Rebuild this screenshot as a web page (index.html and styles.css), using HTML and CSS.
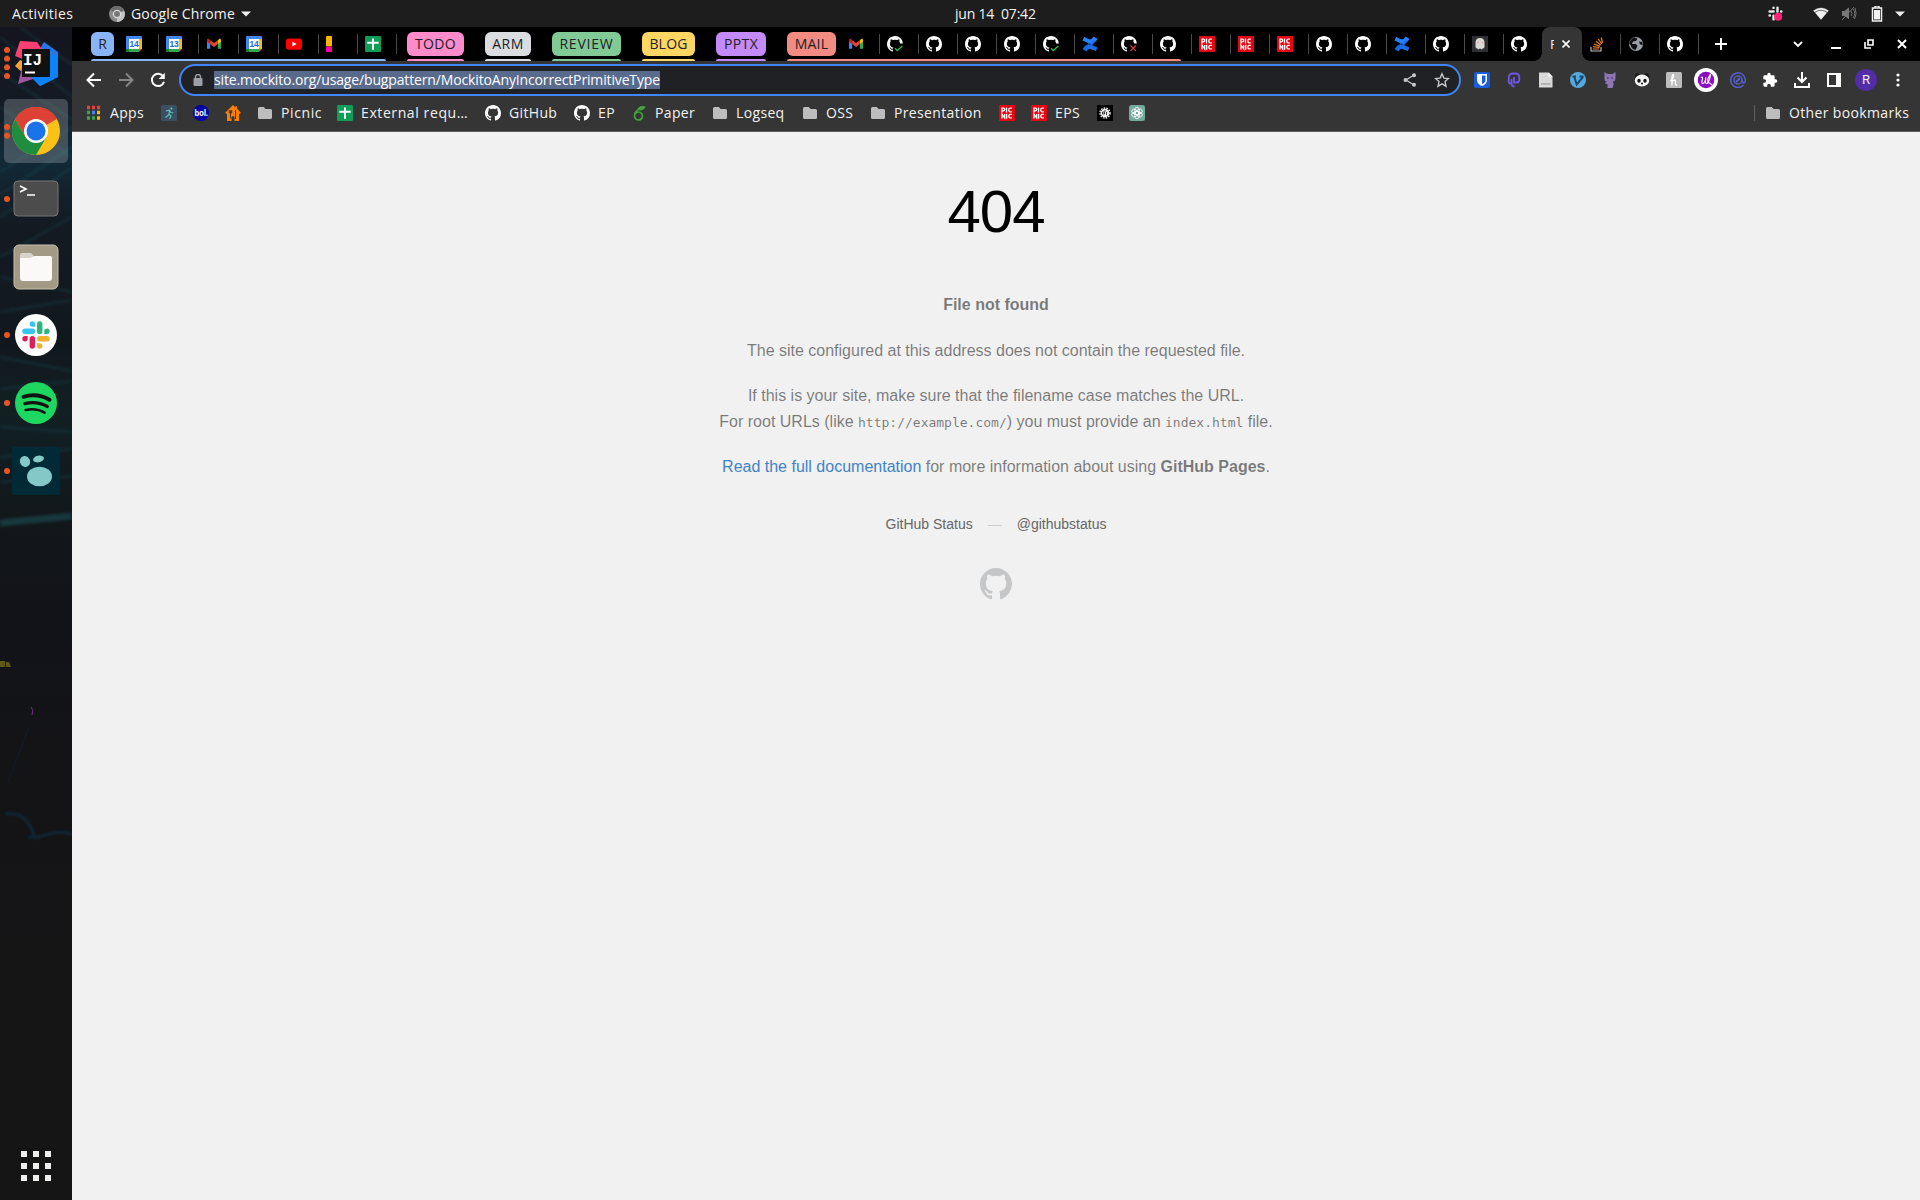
FILE: index.html
```html
<!DOCTYPE html>
<html lang="en">
<head>
<meta charset="utf-8">
<title>Page not found · GitHub Pages</title>
<link rel="stylesheet" href="styles.css">
</head>
<body>
<svg class="defs" width="0" height="0" aria-hidden="true">
  <symbol id="gh" viewBox="0 0 16 16"><path d="M8 0C3.58 0 0 3.58 0 8c0 3.54 2.29 6.53 5.47 7.59.4.07.55-.17.55-.38 0-.19-.01-.82-.01-1.49-2.01.37-2.53-.49-2.69-.94-.09-.23-.48-.94-.82-1.13-.28-.15-.68-.52-.01-.53.63-.01 1.08.58 1.23.82.72 1.21 1.87.87 2.33.66.07-.52.28-.87.51-1.07-1.78-.2-3.64-.89-3.64-3.95 0-.87.31-1.59.82-2.15-.08-.2-.36-1.02.08-2.12 0 0 .67-.21 2.2.82.64-.18 1.32-.27 2-.27s1.36.09 2 .27c1.53-1.04 2.2-.82 2.2-.82.44 1.1.16 1.92.08 2.12.51.56.82 1.27.82 2.15 0 3.07-1.87 3.75-3.65 3.95.29.25.54.73.54 1.48 0 1.07-.01 1.93-.01 2.2 0 .21.15.46.55.38A8.01 8.01 0 0 0 16 8c0-4.42-3.58-8-8-8z"/></symbol>
  <symbol id="ghcut" viewBox="0 0 16 16"><path d="M8 0C3.6 0 0 3.6 0 8c0 3.500 2.300 6.500 5.500 7.600.4 0 .5-.2.5-.4v-1.500c-2 .4-2.500-.5-2.700-.9-.1-.3-.5-1-.8-1.200.5-.6 1 0 1.200.3.700 1.200 1.900.9 2.300.7.1-.5.300-.900.500-1.100C4.700 11.300 2.900 10.600 2.900 7.500c0-.9.300-1.600.8-2.100-.1-.3-.4-1.100.1-2.200 0 0 .7-.2 2.200.9a7.600 7.600 0 0 1 4 0c1.500-1 2.200-.9 2.200-.9.500 1.100.2 1.900.1 2.200.5.5.8 1.200.8 2.100h2.700C15.800 3.300 12.300 0 8 0z"/></symbol>
  <symbol id="gh-ok" viewBox="0 0 16 16"><use href="#ghcut"/><path d="M8 12.200l2.300 2.300L15.300 10" fill="none" stroke="#2cbe4e" stroke-width="1.300"/></symbol>
  <symbol id="gh-bad" viewBox="0 0 16 16"><use href="#ghcut"/><path d="M9.500 9.500l5.400 5.400M14.900 9.500l-5.400 5.400" fill="none" stroke="#d9414e" stroke-width="1.200"/></symbol>
  <symbol id="cal" viewBox="0 0 16 16"><path d="M1 0h14a1 1 0 0 1 1 1v3H4v12H1a1 1 0 0 1-1-1V1a1 1 0 0 1 1-1z" fill="#4285f4"/><path d="M13 3H16v10h-3z" fill="#fbbc04"/><path d="M3 13h10V16H3z" fill="#34a853"/><path d="M13 13H16L13 16z" fill="#ea4335"/><path d="M0 13h3V16H1a1 1 0 0 1-1-1z" fill="#188038"/><path d="M3 3h10v10H3z" fill="#fff"/></symbol>
  <symbol id="gmail" viewBox="0 0 16 16"><path d="M1 4.500v8.300h3.200V7z" fill="#4285f4"/><path d="M15 4.500v8.300h-3.200V7z" fill="#34a853"/><path d="M11.800 4.200L13.200 3c.8-.5 1.800 0 1.800 1.200v1.500L11.800 8z" fill="#fbbc04"/><path d="M4.200 4.200L2.800 3C2 2.500 1 3 1 4.200v1.500L4.200 8z" fill="#c5221f"/><path d="M4.200 4.200L8 7.100l3.800-2.900V8L8 10.900 4.200 8z" fill="#ea4335"/></symbol>
  <symbol id="yt" viewBox="0 0 16 16"><rect y="2.500" width="16" height="11.300" rx="2.800" fill="#f00"/><path d="M6.400 5.700v4.800L10.600 8.100z" fill="#fff"/></symbol>
  <symbol id="marker" viewBox="0 0 16 16"><rect width="6" height="10.500" rx="1" fill="#ffb300"/><rect y="10.500" width="6" height="5.500" rx="1" fill="#ff00a8"/></symbol>
  <symbol id="sheets" viewBox="0 0 16 16"><rect width="16" height="16" rx="1.200" fill="#0f9d58"/><path d="M7 2.500h2v3.300h4.700v2H9v5.900H7V7.800H2.300v-2H7z" fill="#fff"/></symbol>
  <symbol id="conf" viewBox="0 0 16 16"><path d="M.5 4.500L2.300.8q3 2 5.700 2.700 2-.5 3.500-3L15.500 3Q13 7 9.500 7.700 5 7 .5 4.500z" fill="#2684ff"/><path d="M15.500 11.500l-1.800 3.700q-3-2-5.700-2.700-2 .5-3.500 3L.5 13Q3 9 6.500 8.300 11 9 15.500 11.500z" fill="#1668e3"/><path d="M3 2.500l10 11H9L5 5zM12 2.500L5 11l3 2 5-8z" fill="#1f74f0"/></symbol>
  <symbol id="picnic" viewBox="0 0 16 16"><path d="M0 0h16v16H0z" fill="#e30613"/><path d="M3 7.500V3.200h1.700q1 .2 1 1.300T4.500 5.800H3M7.500 2.500v5M12.800 3.200H11q-1.200.2-1.200 1.800T11 6.900h1.800M3 13.500V9l2.700 4V9M7.700 8.700v5M12.800 9.300H11q-1.200.2-1.200 1.800T11 12.900h1.800" fill="none" stroke="#fff" stroke-width="1.300"/></symbol>
  <symbol id="ghost" viewBox="0 0 16 16"><path d="M0 0h16v16H0z" fill="#2e3033"/><path d="M3.500 7q0-5 4.500-5t4.500 5v4q-.5 1.500-2 1.500l-.5 1-2-1-2 1-.5-1q-1.500 0-2-1.500z" fill="#dcd8d2"/><circle cx="6" cy="6.500" r=".8" fill="#e99"/><circle cx="10.500" cy="6.500" r=".8" fill="#e99"/></symbol>
  <symbol id="so" viewBox="0 0 16 16"><path d="M1 11v4h10v-4" fill="none" stroke="#bcbbbb" stroke-width="1.200"/><path d="M2.800 13h6.400M3 10.600l6.300.9M4 8l5.900 2.400M5.800 5.300l5 3.800M8.300 3l3.500 5M11.300 1.500l1.200 5.500" stroke="#f48024" stroke-width="1.200"/></symbol>
  <symbol id="globe" viewBox="0 0 16 16"><circle cx="8" cy="8" r="7" fill="#9aa0a6"/><path d="M9.500 2.500L8 5l-3 .5L4 8h4l1.500 2L8.500 12l-1 2Q3 13 2.700 9L1.200 8Q2 3 6 1.500zM11 5.500l3 .5.8 3-2.800-.5z" fill="#111"/></symbol>
  <symbol id="folder" viewBox="0 0 16 16"><path d="M2.500 2h4.300l1.700 2h5a1.500 1.500 0 0 1 1.500 1.500v7a1.500 1.500 0 0 1-1.500 1.500h-11A1.500 1.500 0 0 1 1 12.500v-9A1.500 1.500 0 0 1 2.500 2z" fill="#bdbdbd"/></symbol>
  <symbol id="slack" viewBox="0 0 28 28"><g stroke-width="5.400" stroke-linecap="round"><path d="M3 10.300h7.500" stroke="#36c5f0"/><path d="M17.700 3v7.500" stroke="#2eb67d"/><path d="M17.700 17.700H25" stroke="#ecb22e"/><path d="M10.300 17.700V25" stroke="#e01e5a"/></g><path d="M13 5.700V3a2.700 2.700 0 1 0-2.700 2.700z" fill="#36c5f0"/><path d="M22.300 13H25a2.700 2.700 0 1 0-2.700-2.700z" fill="#2eb67d"/><path d="M15 22.300V25a2.700 2.700 0 1 0 2.700-2.700z" fill="#ecb22e"/><path d="M5.700 15H3a2.700 2.700 0 1 0 2.700 2.700z" fill="#e01e5a"/></symbol>
</svg>

<header class="topbar">
  <span class="activities">Activities</span>
  <span class="appmenu">
    <svg width="16" height="16" viewBox="0 0 16 16"><circle cx="8" cy="8" r="8" fill="#8b8b8b"/><path d="M8 8L1 4a8 8 0 0 1 14 0z" fill="#6c6c6c"/><path d="M8 8l7.300-3A8 8 0 0 1 8 16z" fill="#c4c4c4"/><circle cx="8" cy="8" r="4.300" fill="#ddd"/><circle cx="8" cy="8" r="3" fill="#777"/></svg>
    <span class="appname">Google Chrome</span>
    <svg width="10" height="6" viewBox="0 0 10 6"><path d="M0 .500h10L5 5.500z" fill="#eee"/></svg>
  </span>
  <span class="clock">jun 14&nbsp; 07:42</span>
  <span class="status">
    <svg class="st-slack" width="15" height="15" viewBox="0 0 28 28"><g stroke="#e8e8e8" stroke-width="4.500" stroke-linecap="round"><path d="M3 10.300h7.500M17.700 3v7.500M10.300 18v7M10.300 3v.5M25 10.300h-.5M3 17.700h.5"/></g><circle cx="19" cy="20" r="7.500" fill="#fb2576"/></svg>
    <svg class="st-wifi" width="16" height="14" viewBox="0 0 16 14"><path d="M0 3.500Q8-2.500 16 3.500L8 13z" fill="#777"/><path d="M.5 3.800Q8-1.800 15.500 3.800l-1 1.200Q8 .5 1.500 5zM2.300 5.800Q8 1.800 13.700 5.800L8 12.500z" fill="#f2f2f2"/></svg>
    <svg class="st-mute" width="16" height="15" viewBox="0 0 16 15"><path d="M1 5h2.500L8 1.200v12L3.500 10H1z" fill="#777"/><path d="M10 5q2 2.500 0 5M12 3q3.500 4.500 0 9M14 2q2.500 5.500-.5 11M1 14L13 1" stroke="#777" fill="none"/></svg>
    <svg width="12" height="16" viewBox="0 0 12 16"><path d="M4 0h4v2H4zM1.500 2h9v13h-9z" fill="none" stroke="#f2f2f2" stroke-width="1.500"/><path d="M3 4h6v9.500H3z" fill="#f2f2f2"/></svg>
    <svg width="10" height="6" viewBox="0 0 10 6"><path d="M0 .500h10L5 5.500z" fill="#eee"/></svg>
  </span>
</header>

<div class="desktop">
  <nav class="dock">
    <svg class="wallpaper" width="72" height="1173" viewBox="0 0 72 1173">
      <defs><linearGradient id="wall" x2="0" y2="1"><stop offset="0" stop-color="#14151e"/><stop offset=".06" stop-color="#141a24"/><stop offset=".11" stop-color="#122a38"/><stop offset=".17" stop-color="#131a22"/><stop offset=".27" stop-color="#11181d"/><stop offset=".33" stop-color="#112024"/><stop offset=".42" stop-color="#12171a"/><stop offset=".5" stop-color="#121319"/><stop offset=".65" stop-color="#141416"/><stop offset="1" stop-color="#151515"/></linearGradient></defs>
      <path d="M0 0h72v1173H0z" fill="url(#wall)"/>
      <g class="streaks"><path d="M0 10l72 60M0 45l72 48M20 0l52 38M0 80l72 50M0 145l72-45M0 168l72-48M0 190l72-50M0 230l72-40M0 250l72 15M0 285l72-12M0 330l72 14M0 362l72-8M0 400l72 5M0 430l72-8M0 455l72-6"/><path class="bright" d="M0 496l72-7"/></g>
      <path d="M0 634h5v6H0zM6 635h3l2 5H6z" fill="#5f5a13"/><path d="M31 680q3 3 1 8" stroke="#79318a" fill="none"/><path d="M29 700L8 755" stroke="#101c31" fill="none"/><path class="smoke" d="M5 787q22-4 30 24M28 810h12q16-7 32-3" stroke="#0f2736" stroke-width="3" fill="none"/>
    </svg>
    <div class="app"><i class="dots d4"></i><svg width="48" height="48" viewBox="0 0 48 48"><path d="M32 3l14 10v25l-18 9L14 32z" fill="#2678e8"/><path d="M8 21l-5 6 8 7 9-8z" fill="#f4a136"/><path d="M8 2l17 1 8 12-20 6-10-4z" fill="#fc3f72"/><path d="M12 20l12 19-18 6z" fill="#a055a0"/><path d="M26 18l20-2v22l-18 9-9-9z" fill="#0b82fa"/><path d="M10 10h28v28H10z" fill="#111"/><path d="M13 32.500h10v2H13z" fill="#fff"/><text x="11" y="25.500" class="ij">IJ</text></svg></div>
    <div class="app active"><i class="dots d2"></i><svg width="48" height="48" viewBox="0 0 48 48"><circle cx="24" cy="24" r="24" fill="#fbc116"/><path d="M24 24L3.200 12A24 24 0 0 1 44.800 12z" fill="#db4437"/><path d="M3.200 12A24 24 0 0 0 24 48l10.400-18L24 24 13.600 30z" fill="#1e8e3e"/><path d="M3.200 12A24 24 0 0 1 44.800 12H24L13.600 30z" fill="#dd4034"/><circle cx="24" cy="24" r="12" fill="#fff"/><circle cx="24" cy="24" r="9.500" fill="#1a73e8"/></svg></div>
    <div class="app"><i class="dots d1"></i><svg width="46" height="38" viewBox="0 0 46 38"><rect x="1" y="1" width="44" height="35" rx="4" fill="#4c4c4c" stroke="#777"/><path d="M7 6l6 3-6 3M14 15h8" stroke="#fff" stroke-width="1.600" fill="none"/></svg></div>
    <div class="app"><svg width="46" height="46" viewBox="0 0 46 46"><rect x="1" y="1" width="44" height="44" rx="5" fill="#a39a86" stroke="#c7bfae"/><path d="M7 11q0-2 2-2h9l4 4h17v20H7z" fill="#d8d4c8"/><path d="M7 14h10l5-2h15q2 0 2 2v20q0 3-3 3H10q-3 0-3-3z" fill="#faf9f7"/></svg></div>
    <div class="app"><i class="dots d1"></i><svg width="42" height="42" viewBox="0 0 42 42"><circle cx="21" cy="21" r="21" fill="#fff"/><use href="#slack" x="7" y="7" width="28" height="28"/></svg></div>
    <div class="app"><i class="dots d1"></i><svg width="42" height="42" viewBox="0 0 42 42"><circle cx="21" cy="21" r="21" fill="#1ed760"/><g fill="none" stroke="#121212" stroke-linecap="round"><path d="M8.500 14.800q14-4 26 3" stroke-width="4"/><path d="M9.800 21.600q12-3 22.500 2.900" stroke-width="3.200"/><path d="M10.600 28q10.500-2.500 19 2.600" stroke-width="2.600"/></g></svg></div>
    <div class="app"><i class="dots d1"></i><svg width="48" height="48" viewBox="0 0 48 48"><path d="M0 0h48v48H0z" fill="#002b36"/><g fill="#85c8c8"><ellipse cx="27.500" cy="29.500" rx="12.500" ry="9.800"/><ellipse cx="13" cy="14.500" rx="5" ry="5.600" transform="rotate(-30 13 14.500)"/><ellipse cx="26.500" cy="12" rx="5.500" ry="3.300" transform="rotate(-10 26.500 12)"/></g></svg></div>
    <svg class="grid" width="30" height="30" viewBox="0 0 30 30"><path stroke="#eeeeec" stroke-width="6" stroke-dasharray="6 6" d="M0 3h30M0 15h30M0 27h30"/></svg>
  </nav>

  <main class="browser">
    <div class="tabstrip">
      <div class="group g-r"><span class="chip">R</span>
        <span class="tab first w40"><svg><use href="#cal"/></svg><b class="day">14</b></span><span class="tab w40"><svg><use href="#cal"/></svg><b class="day">13</b></span><span class="tab w40"><svg><use href="#gmail"/></svg></span><span class="tab w40"><svg><use href="#cal"/></svg><b class="day">14</b></span><span class="tab w40"><svg><use href="#yt"/></svg></span><span class="tab"><svg><use href="#marker"/></svg></span><span class="tab"><svg><use href="#sheets"/></svg></span>
      </div>
      <div class="group g-todo"><span class="chip">TODO</span></div>
      <div class="group g-arm"><span class="chip">ARM</span></div>
      <div class="group g-review"><span class="chip">REVIEW</span></div>
      <div class="group g-blog"><span class="chip">BLOG</span></div>
      <div class="group g-pptx"><span class="chip">PPTX</span></div>
      <div class="group g-mail"><span class="chip">MAIL</span>
        <span class="tab first"><svg><use href="#gmail"/></svg></span><span class="tab"><svg><use href="#gh-ok"/></svg></span><span class="tab"><svg><use href="#gh"/></svg></span><span class="tab"><svg><use href="#gh"/></svg></span><span class="tab"><svg><use href="#gh"/></svg></span><span class="tab"><svg><use href="#gh-ok"/></svg></span><span class="tab"><svg><use href="#conf"/></svg></span><span class="tab"><svg><use href="#gh-bad"/></svg></span><span class="tab"><svg><use href="#gh"/></svg></span>
      </div>
      <span class="tab"><svg><use href="#picnic"/></svg></span><span class="tab"><svg><use href="#picnic"/></svg></span><span class="tab"><svg><use href="#picnic"/></svg></span><span class="tab"><svg><use href="#gh"/></svg></span><span class="tab"><svg><use href="#gh"/></svg></span><span class="tab"><svg><use href="#conf"/></svg></span><span class="tab"><svg><use href="#gh"/></svg></span><span class="tab"><svg><use href="#ghost"/></svg></span><span class="tab"><svg><use href="#gh"/></svg></span>
      <span class="tab current"><span class="title">P</span><svg width="8" height="8" viewBox="0 0 8 8"><path d="M.5.5l7 7M7.500.5l-7 7" stroke="#fff" stroke-width="1.600"/></svg></span>
      <span class="tab first after"><svg><use href="#so"/></svg></span><span class="tab"><svg><use href="#globe"/></svg></span><span class="tab"><svg><use href="#gh"/></svg></span><span class="tab newtab"><svg width="12" height="12" viewBox="0 0 12 12"><path d="M6 0v12M0 6h12" stroke="#fff" stroke-width="2"/></svg></span>
      <div class="wincontrols">
        <svg width="10" height="7" viewBox="0 0 10 7"><path d="M1 1l4 4 4-4" fill="none" stroke="#fff" stroke-width="1.800"/></svg>
        <svg width="10" height="10" viewBox="0 0 10 10"><path d="M0 9h10" stroke="#fff" stroke-width="2"/></svg>
        <svg width="10" height="10" viewBox="0 0 10 10"><path d="M4 1h5v5H4zM1 3v6h6" fill="none" stroke="#fff" stroke-width="1.600"/></svg>
        <svg width="10" height="10" viewBox="0 0 10 10"><path d="M1 1l8 8M9 1L1 9" stroke="#fff" stroke-width="2"/></svg>
      </div>
    </div>

    <div class="toolbar">
      <span class="btn"><svg width="16" height="16" viewBox="0 0 16 16"><path d="M15 8H2M8 1.500L1.500 8 8 14.500" fill="none" stroke="#fff" stroke-width="2"/></svg></span>
      <span class="btn"><svg width="16" height="16" viewBox="0 0 16 16"><path d="M1 8h13M8 1.500L14.500 8 8 14.500" fill="none" stroke="#868686" stroke-width="2"/></svg></span>
      <span class="btn"><svg width="16" height="16" viewBox="0 0 16 16"><path d="M13.300 4.500A6.200 6.200 0 1 0 14 9.800" fill="none" stroke="#fff" stroke-width="2"/><path d="M14.800.8V7H8.600z" fill="#fff"/></svg></span>
      <div class="omnibox">
        <svg class="lock" width="10" height="12" viewBox="0 0 10 12"><rect x=".500" y="4" width="9" height="8" rx="1" fill="#9aa0a6"/><path d="M2.500 4.500V3a2.500 2.500 0 0 1 5 0v1.500" fill="none" stroke="#9aa0a6" stroke-width="1.400"/></svg>
        <span class="url">site.mockito.org/usage/bugpattern/MockitoAnyIncorrectPrimitiveType</span>
        <svg class="share" width="14" height="14" viewBox="0 0 14 14"><path d="M11 2L3 7l8 5" fill="none" stroke="#c4c7cb" stroke-width="1.300"/><g fill="#c4c7cb"><circle cx="11" cy="2.300" r="2"/><circle cx="2.500" cy="7" r="2"/><circle cx="11" cy="11.700" r="2"/></g></svg>
        <svg width="16" height="16" viewBox="0 0 16 16"><path d="M8 1.800l1.900 4.300 4.600.4L11 9.600l1 4.600-4-2.400-4 2.400 1-4.600-3.500-3.100 4.600-.4z" fill="none" stroke="#c4c7cb" stroke-width="1.400"/></svg>
      </div>
      <div class="exts">
        <span class="btn"><svg width="16" height="16" viewBox="0 0 16 16"><rect width="16" height="16" rx="2" fill="#175ddc"/><path d="M3 2h10v6q0 4-5 6-5-2-5-6z" fill="#fff"/><path d="M8 3.500h3.500V8q0 2.500-3.500 4.300z" fill="#175ddc"/></svg></span>
        <span class="btn"><svg width="16" height="16" viewBox="0 0 16 16"><path d="M8 5v5.500h2.500q2.800 0 2.800-3V5.500q0-4-4-4H7Q2.700 1.500 2.700 6v3.500q0 2 2 2M5.500 7v4.500q0 3 3 3" fill="none" stroke="#6f55e8" stroke-width="1.800"/></svg></span>
        <span class="btn"><svg width="14" height="16" viewBox="0 0 14 16"><path d="M0 .5h9.500l4 4v11H0z" fill="#d9d9d9"/><path d="M9.500.5v4h4" fill="#fff"/><path d="M2 11h9.500v2H2z" fill="#b2b2b2"/></svg></span>
        <span class="btn"><svg width="16" height="16" viewBox="0 0 16 16"><circle cx="8" cy="8" r="8" fill="#57a9dc"/><path d="M2.500 4.500h3.500M9.500 4.500h4M4.200 4.500l2.500 8L13 5" fill="none" stroke="#174a70" stroke-width="2"/></svg></span>
        <span class="btn"><svg width="16" height="16" viewBox="0 0 16 16"><path d="M2.500 0l3 2h5l3-2v6.500q0 2.500-2.500 3v2h1L10.500 16h-5v-4H3.500V10h2Q2.500 9.500 2.500 7z" fill="#8e76b5"/><ellipse cx="5.800" cy="6" rx="1" ry="1.300" fill="#5f4b85"/><ellipse cx="10.200" cy="6" rx="1" ry="1.300" fill="#5f4b85"/></svg></span>
        <span class="btn"><svg width="16" height="16" viewBox="0 0 16 16"><circle cx="3.500" cy="4" r="2.500" fill="#151515"/><circle cx="12.500" cy="4" r="2.500" fill="#151515"/><ellipse cx="8" cy="8.500" rx="7.200" ry="6" fill="#f4f4f4"/><ellipse cx="5" cy="8.700" rx="1.700" ry="2" fill="#151515"/><ellipse cx="11" cy="8.700" rx="1.700" ry="2" fill="#151515"/><circle cx="8" cy="11.500" r="1" fill="#151515"/></svg></span>
        <span class="btn"><svg width="16" height="16" viewBox="0 0 16 16"><rect width="16" height="16" rx="1.500" fill="#bcbcbc"/><path d="M4.500 9Q8.500 5 7.500 2.500 6 2 6 7v6.500M6 9.500q3.500-3 3.500 0-.5 4.500 1.500 3.500" fill="none" stroke="#fff" stroke-width="1.300"/></svg></span>
        <span class="btn"><svg width="24" height="24" viewBox="0 0 24 24"><circle cx="12" cy="12" r="12" fill="#fff"/><circle cx="12" cy="12" r="8.300" fill="#8b0fc0"/><path d="M7 9.500q2-1.500 1.500 1.500-1.500 5 .5 4.500t3-6q-1.500 6 .5 6t3.500-6-1-1-.5 6 3.500 2.500" fill="none" stroke="#fff" stroke-width="1.100"/></svg></span>
        <span class="btn"><svg width="16" height="16" viewBox="0 0 16 16"><g fill="none" stroke="#5560c9"><path d="M13.500 13A7.300 7.300 0 1 1 15.300 8q0 3-1.500 3T12 8" stroke-width="1.500"/><circle cx="8" cy="8" r="4" stroke-width="1.500"/><path d="M6 10l4-4" stroke-width="2"/></g></svg></span>
        <span class="btn"><svg width="16" height="16" viewBox="0 0 24 24"><path fill="#fff" d="M20.500 11H19V7a2 2 0 0 0-2-2h-4V3.500a2.500 2.500 0 0 0-5 0V5H4a2 2 0 0 0-2 2v3.800h1.500a2.700 2.700 0 0 1 0 5.400H2V20a2 2 0 0 0 2 2h3.800v-1.500a2.700 2.700 0 0 1 5.400 0V22H17a2 2 0 0 0 2-2v-4h1.500a2.500 2.500 0 0 0 0-5z"/></svg></span>
        <span class="btn"><svg width="16" height="16" viewBox="0 0 16 16"><path d="M8 0v9M3.500 5.500L8 10l4.500-4.500M1 11v4h14v-4" fill="none" stroke="#fff" stroke-width="2"/></svg></span>
        <span class="btn"><svg width="14" height="14" viewBox="0 0 14 14"><path d="M1 1h12v12H1z" fill="none" stroke="#fff" stroke-width="2"/><path d="M9 1h5v12H9z" fill="#fff"/></svg></span>
        <span class="btn"><span class="avatar">R</span></span>
        <span class="btn"><svg width="4" height="14" viewBox="0 0 4 14"><g fill="#fff"><circle cx="2" cy="2" r="1.600"/><circle cx="2" cy="7" r="1.600"/><circle cx="2" cy="12" r="1.600"/></g></svg></span>
      </div>
    </div>

    <div class="bookmarks">
      <span class="bm"><svg viewBox="0 0 16 16"><g stroke-width="3.500" stroke-dasharray="3 2"><path d="M1 2.500h13" stroke="#ea4335"/><path d="M1 7.500h3" stroke="#34a853"/><path d="M6 7.500h3" stroke="#4285f4"/><path d="M11 7.500h3" stroke="#fbbc04"/><path d="M1 13h8" stroke="#34a853"/><path d="M11 13h3" stroke="#fbbc04"/></g></svg><span class="t-apps">Apps</span></span>
      <span class="bm"><svg viewBox="0 0 16 16"><rect width="16" height="16" rx="1.500" fill="#3a5060"/><circle cx="10.500" cy="3.500" r="1.100" fill="#61c4c9"/><path d="M5 6l3.500-.8 1.300 2.300 2.500.3M8.500 5.500L8 9l2 2-1.500 3M8 9.500L4.500 12.500" fill="none" stroke="#61c4c9" stroke-width="1.100"/></svg></span>
      <span class="bm bol"><svg viewBox="0 0 16 16"><circle cx="8" cy="8" r="8" fill="#0000a4"/></svg><b>bol.</b></span>
      <span class="bm"><svg viewBox="0 0 16 16"><path d="M8 0l2 2 2-1v2.500L16 8l-2 1v7H9.500v-4L8 11l-1.500 1v4H2V9L0 8z" fill="#ff8000"/><path d="M5.500 5.500v8M4.300 5v3h2.400V5M10.500 5v9" fill="none" stroke="#353535"/></svg></span>
      <span class="bm"><svg><use href="#folder"/></svg><span class="t-picnic">Picnic</span></span>
      <span class="bm"><svg><use href="#sheets"/></svg><span class="t-ext">External requ…</span></span>
      <span class="bm"><svg><use href="#gh"/></svg><span class="t-gh">GitHub</span></span>
      <span class="bm"><svg><use href="#gh"/></svg><span class="t-ep">EP</span></span>
      <span class="bm"><svg viewBox="0 0 16 16"><path d="M12 3Q3.500 5 3.500 10.500A4 4 0 1 0 7.500 7Q5.500 7 4 9M7 4.500Q9 1 13.500 2q-1 2-5 3" fill="none" stroke="#46a33c" stroke-width="1.700"/></svg><span class="t-paper">Paper</span></span>
      <span class="bm"><svg><use href="#folder"/></svg><span class="t-logseq">Logseq</span></span>
      <span class="bm"><svg><use href="#folder"/></svg><span class="t-oss">OSS</span></span>
      <span class="bm"><svg><use href="#folder"/></svg><span class="t-pres">Presentation</span></span>
      <span class="bm"><svg><use href="#picnic"/></svg></span>
      <span class="bm"><svg><use href="#picnic"/></svg><span class="t-eps">EPS</span></span>
      <span class="bm"><svg viewBox="0 0 16 16"><path d="M0 0h16v16H0z" fill="#000"/><circle cx="8" cy="8" r="4.300" fill="#eee"/><circle cx="8" cy="8" r="5" fill="none" stroke="#eee" stroke-width="1.500" stroke-dasharray="1.500 1.200"/><path d="M5.500 7h2v2h-2zM9.500 7v3M8 5v2" stroke="#111" fill="none" stroke-width=".8"/></svg></span>
      <span class="bm"><svg viewBox="0 0 16 16"><rect width="16" height="16" rx="2.500" fill="#74aa9c"/><g fill="none" stroke="#fff" stroke-width=".8"><rect x="5.800" y="2.300" width="4.400" height="7.500" rx="2.200"/><rect x="5.800" y="2.300" width="4.400" height="7.500" rx="2.200" transform="rotate(60 8 8)"/><rect x="5.800" y="2.300" width="4.400" height="7.500" rx="2.200" transform="rotate(120 8 8)"/><rect x="5.800" y="2.300" width="4.400" height="7.500" rx="2.200" transform="rotate(180 8 8)"/><rect x="5.800" y="2.300" width="4.400" height="7.500" rx="2.200" transform="rotate(240 8 8)"/><rect x="5.800" y="2.300" width="4.400" height="7.500" rx="2.200" transform="rotate(300 8 8)"/></g></svg></span>
      <span class="bm other"><svg><use href="#folder"/></svg><span class="t-other">Other bookmarks</span></span>
    </div>

    <section class="page">
      <h1>404</h1>
      <p><strong>File not found</strong></p>
      <p>The site configured at this address does not contain the requested file.</p>
      <p>If this is your site, make sure that the filename case matches the URL.<br>For root URLs (like <code>http://example.com/</code>) you must provide an <code>index.html</code> file.</p>
      <p><a href="#">Read the full documentation</a> for more information about using <strong>GitHub Pages</strong>.</p>
      <div class="suggestions"><a href="#">GitHub Status</a><span>—</span><a href="#">@githubstatus</a></div>
      <svg class="logo" width="32" height="32"><use href="#gh"/></svg>
    </section>
  </main>
</div>
</body>
</html>
```
FILE: styles.css
```css
* { box-sizing: border-box; }
body { margin: 0; width: 1920px; height: 1200px; overflow: hidden; display: flex; flex-direction: column; font: 14px/20px "Open Sans", "Noto Sans", sans-serif; color: #f2f2f2; background: #000; }
svg { display: block; flex: none; }
.defs { position: absolute; }

/* desktop bar */
.topbar { height: 27px; flex: none; background: #1d1d1d; display: grid; grid-template-columns: 97px 846px 83px 1fr; align-items: center; padding: 0 15px 0 12px; white-space: nowrap; }
.activities { letter-spacing: .35px; }
.appmenu { display: flex; align-items: center; gap: 6px; }
.appname { width: 104px; letter-spacing: .15px; }
.clock { letter-spacing: -.2px; }
.status { display: flex; align-items: center; justify-content: flex-end; gap: 12px; }
.st-mute { margin-right: 2px; }
.st-slack { margin-right: 18px; }

.desktop { flex: 1; display: flex; min-height: 0; }

/* dock */
.dock { position: relative; width: 72px; flex: none; display: flex; flex-direction: column; align-items: center; padding: 2px 0 19px; overflow: hidden; background: #151515; }
.wallpaper { position: absolute; left: 0; top: 0; }
.streaks { stroke: #1c5560; stroke-width: 2; opacity: .38; fill: none; filter: blur(1.5px); }
.bright { stroke: #1f6f78; stroke-width: 7; }
.smoke { filter: blur(1px); }
.app { position: relative; width: 64px; height: 64px; margin: 2px 0; flex: none; display: flex; align-items: center; justify-content: center; }
.active { background: rgba(255, 255, 255, .2); border-radius: 5px; }
.dots { position: absolute; left: 0; top: 50%; width: 6px; height: 6px; margin-top: -3px; border-radius: 3px; background: #e95420; }
.d2 { height: 15px; margin-top: -7px; background: radial-gradient(circle at 3px 3px, #e95420 2.7px, transparent 3.2px) 0 0 / 6px 8.7px; border-radius: 0; }
.d4 { height: 33px; margin-top: -16px; background: radial-gradient(circle at 3px 3px, #e95420 2.7px, transparent 3.2px) 0 0 / 6px 8.7px; border-radius: 0; }
.ij { font: bold 16px "Liberation Mono", monospace; fill: #fff; }
.grid { position: relative; margin-top: auto; }

.browser { flex: 1; min-width: 0; display: flex; flex-direction: column; background: #353535; }

/* tab strip */
.tabstrip { height: 34px; flex: none; background: #000; display: flex; align-items: center; padding-left: 19px; }
.group { position: relative; display: flex; align-items: center; height: 34px; margin-right: 21px; flex: none; }
.group::after { content: ""; position: absolute; left: 0; right: 0; bottom: 0; height: 2px; background: var(--c); border-radius: 2px 2px 0 0; }
.chip { height: 24px; border-radius: 6px; background: var(--c); color: #202124; text-align: center; line-height: 24px; white-space: nowrap; flex: none; }
.g-r { --c: #8ab4f8; margin-right: 11px; }
.g-r::after { right: 10px; }
.g-r .chip { width: 23px; margin-right: 4px; }
.g-todo { --c: #ff8bcb; } .g-todo .chip { width: 57px; letter-spacing: .4px; }
.g-todo::before { content: ""; position: absolute; left: -11px; top: 7px; width: 1px; height: 20px; background: #4a4a4a; }
.g-arm { --c: #dadce0; } .g-arm .chip { width: 46px; letter-spacing: .4px; }
.g-review { --c: #81c995; } .g-review .chip { width: 69px; letter-spacing: .8px; }
.g-blog { --c: #fdd663; } .g-blog .chip { width: 53px; letter-spacing: .2px; }
.g-pptx { --c: #c58af9; } .g-pptx .chip { width: 50px; letter-spacing: .4px; }
.g-mail { --c: #f28b82; margin-right: 0; } .g-mail .chip { width: 49px; margin-right: 4px; letter-spacing: .2px; }
.g-mail::after { right: 10px; }
.tab { position: relative; width: 39px; height: 34px; flex: none; display: flex; align-items: center; padding-left: 8px; background: linear-gradient(#4a4a4a, #4a4a4a) 0 7px / 1px 20px no-repeat; fill: #fff; }
.tab > svg:not([width]) { width: 16px; height: 16px; }
.w40 { width: 40px; }
.first { background: none; }
.day { position: absolute; left: 8px; top: 9px; width: 16px; text-align: center; font: bold 8.5px/16px "Liberation Sans", sans-serif; letter-spacing: -.3px; color: #1967d2; }
.current { width: 40px; background: #353535; border-radius: 8px 8px 0 0; gap: 8px; }
.current::before, .current::after { content: ""; position: absolute; bottom: 0; width: 8px; height: 8px; }
.current::before { left: -8px; background: radial-gradient(circle at 0 0, transparent 7.5px, #353535 8px); }
.current::after { right: -8px; background: radial-gradient(circle at 8px 0, transparent 7.5px, #353535 8px); }
.title { width: 4px; overflow: hidden; font-size: 13px; }
.after { width: 38px; }
.newtab { padding-left: 17px; }
.wincontrols { margin-left: auto; margin-right: 13px; display: flex; align-items: center; gap: 23px; }
.wincontrols svg:first-child { margin-right: 5px; }

/* toolbar */
.toolbar { height: 38px; flex: none; display: flex; align-items: center; padding: 0 6px; }
.btn { width: 32px; height: 32px; flex: none; display: flex; align-items: center; justify-content: center; }
.omnibox { width: 1282px; height: 32px; margin: 0 5px; border: 2px solid #4285f4; border-radius: 16px; background: #202124; display: flex; align-items: center; padding: 0 9px 0 12px; }
.url { margin-left: 11px; width: 446px; height: 18px; line-height: 17px; background: #596b8d; color: #fff; white-space: nowrap; letter-spacing: -.145px; }
.share { margin-left: auto; margin-right: 17px; }
.exts { display: flex; }
.avatar { width: 22px; height: 22px; border-radius: 11px; background: #512da8; text-align: center; font: 13px/22px Roboto, sans-serif; }

/* bookmarks */
.bookmarks { height: 33px; flex: none; display: flex; align-items: center; gap: 16px; padding: 0 10px 4px 14px; border-bottom: 1px solid #5f5e5e; white-space: nowrap; fill: #fff; letter-spacing: .35px; }
.bm { position: relative; display: flex; align-items: center; gap: 8px; flex: none; }
.bm svg { width: 16px; height: 16px; }
.bol b { position: absolute; left: 0; width: 16px; text-align: center; font: bold 8px/14px "Open Sans", sans-serif; letter-spacing: -.3px; }
.t-apps { width: 35px; } .t-picnic { width: 40px; letter-spacing: .6px; } .t-ext { width: 108px; letter-spacing: .6px; } .t-gh { width: 49px; } .t-ep { width: 17px; }
.t-paper { width: 41px; } .t-logseq { width: 50px; } .t-oss { width: 28px; } .t-pres { width: 89px; } .t-eps { width: 26px; }
.other { margin-left: auto; padding-left: 11px; background: linear-gradient(#5f5f5f, #5f5f5f) 0 2px / 1px 16px no-repeat; }
.t-other { width: 121px; }

/* page */
.page { flex: 1; background: #f1f1f1; color: #000; text-align: center; font: 16px/1.6 "Liberation Sans", Arial, sans-serif; }
.page h1 { margin: 50px 0; font: 400 60px/60px "Liberation Sans", Arial, sans-serif; letter-spacing: -1px; }
.page p { margin: 20px 0; color: rgba(0, 0, 0, .5); }
.page code { font: 13px "DejaVu Sans Mono", monospace; }
.page a { color: #4183c4; text-decoration: none; }
.suggestions { margin-top: 34px; font-size: 14px; line-height: 20px; color: #ccc; display: flex; justify-content: center; gap: 15px; }
.page .suggestions a { color: #666; }
.logo { margin: 34px auto 0; fill: #c5c6c8; }
```
